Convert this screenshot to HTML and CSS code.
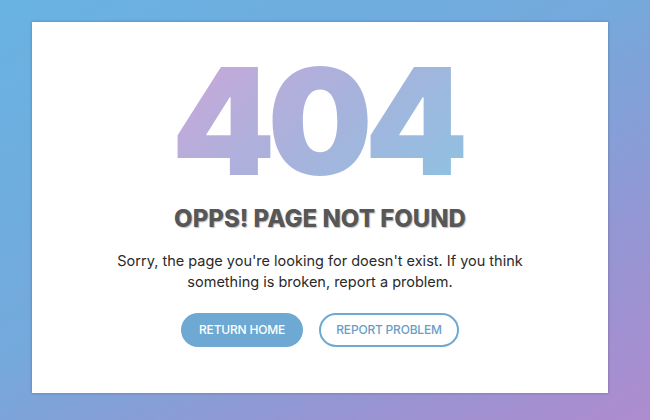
FILE: index.html
```html
<!DOCTYPE html>
<html>
<head>
  <title>404 - Page not found</title>
  <link rel="stylesheet" href="styles.css">
</head>
<body>
  <div class="page">
    <div class="card">
      <h1 class="code">404</h1>
      <h2 class="title">OPPS! PAGE NOT FOUND</h2>
      <p class="msg">Sorry, the page you're looking for doesn't exist. If you think something is broken, report a problem.</p>
      <div class="actions">
        <a class="btn btn-fill" href="#">RETURN HOME</a>
        <a class="btn btn-line" href="#">REPORT PROBLEM</a>
      </div>
    </div>
  </div>
</body>
</html>
```

FILE: styles.css
```css
html,
body {
  margin: 0;
  height: 100%;
  font-family: "Inter", "Open Sans", sans-serif;
}

.page {
  height: 420px;
  background: linear-gradient(150deg, #68b3e2 0%, #74a9dc 45%, #9a93d2 80%, #ae8ccf 100%);
  padding: 22px 42px 27px 32px;
  box-sizing: border-box;
}

.card {
  background: #ffffff;
  height: 100%;
  box-shadow: 0 0 3px rgba(0, 0, 0, 0.25);
  display: flex;
  flex-direction: column;
  align-items: center;
}

.code {
  margin: 30px 0 0;
  font-size: 148px;
  font-weight: 900;
  line-height: 140px;
  letter-spacing: -8px;
  padding-right: 8px;
  background: linear-gradient(135deg, #cca7d9 0%, #a8b2dc 50%, #8cc3e2 100%);
  -webkit-background-clip: text;
  background-clip: text;
  color: transparent;
}

.title {
  margin: 12px 0 0;
  font-size: 24px;
  font-weight: 800;
  color: #575757;
  text-shadow: 1px 1px 1px rgba(0, 0, 0, 0.25);
  letter-spacing: 0;
}

.msg {
  margin: 17px 0 0;
  width: 430px;
  text-align: center;
  font-size: 14.5px;
  line-height: 21px;
  color: #2a2a2a;
}

.actions {
  margin-top: 21px;
  display: flex;
  gap: 16px;
}

.btn {
  display: block;
  height: 34px;
  line-height: 34px;
  border-radius: 17px;
  font-size: 12px;
  font-weight: 500;
  text-decoration: none;
  box-sizing: border-box;
  letter-spacing: -0.2px;
}

.btn-fill {
  width: 122px;
  text-align: center;
  background: #6da9d3;
  color: #ffffff;
}

.btn-line {
  width: 140px;
  text-align: center;
  border: 2px solid #6da9d3;
  line-height: 30px;
  color: #6a9dc9;
}
```
